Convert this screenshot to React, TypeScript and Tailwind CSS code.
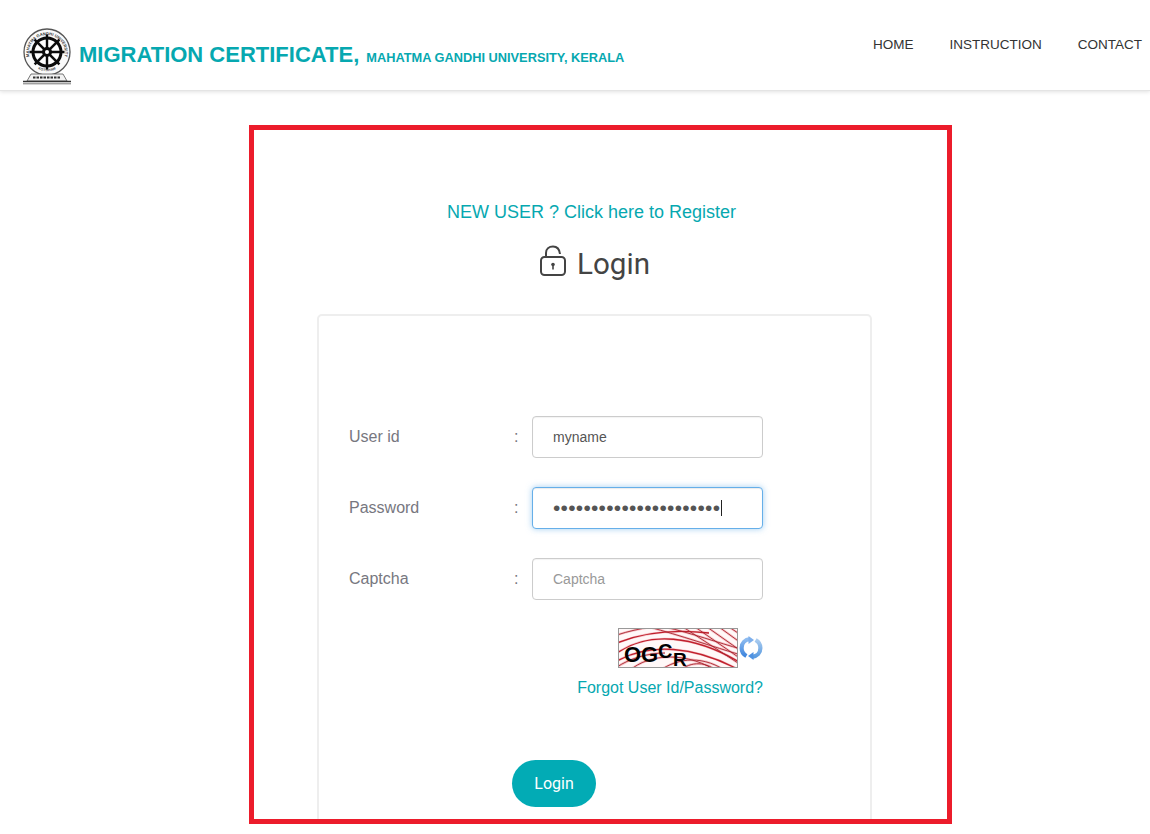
import React from "react";

function Logo() {
  const spokes = [0, 45, 90, 135];
  return (
    <svg width="50" height="57" viewBox="0 0 50 57" className="shrink-0">
      <defs>
        <path id="ringTop" d="M10 35 A18 18 0 1 1 40 35" />
        <path id="ringBottom" d="M13 39 A19 19 0 0 0 37 39" />
      </defs>
      <circle cx="25" cy="24" r="23" fill="#fafafa" stroke="#555" strokeWidth="1.3" />
      <text fontSize="4.1" fontWeight="700" fill="#333" fontFamily="Liberation Sans, sans-serif">
        <textPath href="#ringTop" startOffset="50%" textAnchor="middle">MAHATMA GANDHI UNIVERSITY</textPath>
      </text>
      <text fontSize="3.4" fontWeight="700" fill="#444" fontFamily="Liberation Sans, sans-serif">
        <textPath href="#ringBottom" startOffset="50%" textAnchor="middle">KOTTAYAM</textPath>
      </text>
      <circle cx="25" cy="24" r="14" fill="#fff" stroke="#0c0c0c" strokeWidth="3" />
      {spokes.map((a) => (
        <line key={a} x1="25" y1="6.5" x2="25" y2="41.5" stroke="#0c0c0c" strokeWidth="2.4" transform={`rotate(${a} 25 24)`} />
      ))}
      <circle cx="25" cy="24" r="5" fill="#0c0c0c" />
      <circle cx="25" cy="24" r="2" fill="#fff" />
      <path d="M5 53 L9 46 H41 L45 53 Z" fill="#f2f2f2" stroke="#555" strokeWidth="0.8" />
      <path d="M11 49.5 H39" stroke="#333" strokeWidth="1.8" strokeDasharray="2.5 1" />
      <path d="M1 53.5 H49" stroke="#333" strokeWidth="1.4" />
      <path d="M1 55.8 H49" stroke="#777" strokeWidth="1" />
    </svg>
  );
}

function Field({ label, children, last }: { label: string; children: React.ReactNode; last?: boolean }) {
  return (
    <div className={last ? "flex items-center h-[42px] mb-[28px]" : "flex items-center h-[42px] mb-[29px]"}>
      <label className="w-[165px] text-base text-[#777780]">{label}</label>
      <span className="w-[18px] text-base text-[#777780]">:</span>
      {children}
    </div>
  );
}

const inputCls =
  "w-[231px] h-[42px] rounded-[4px] border border-[#ccc] bg-white pl-5 pr-3 text-sm text-[#555] outline-none placeholder:text-[#999] shadow-[inset_0_1px_1px_rgba(0,0,0,0.05)]";

function Captcha() {
  const dark = [
    "M-2 24 C 30 2, 75 6, 122 34",
    "M-2 32 C 30 14, 75 16, 122 42",
    "M-2 14 C 25 3, 55 0, 90 4",
    "M10 42 C 30 24, 70 22, 100 44",
    "M30 -2 C 60 6, 95 18, 122 26",
    "M46 -2 C 72 4, 100 14, 122 20",
    "M64 -2 L 122 36",
    "M76 -2 L 122 30",
    "M88 -2 L 122 22",
    "M100 -2 L 122 14",
    "M110 -2 L 122 6",
    "M40 42 C 60 28, 85 26, 110 44",
    "M-2 6 C 10 2, 20 0, 32 -2",
    "M60 42 C 72 32, 88 32, 100 44",
    "M-2 38 C 10 30, 28 24, 46 24",
  ];
  return (
    <div className="relative w-[120px] h-[40px] border border-[#999] bg-[#fff8f8]">
      <svg width="118" height="38" viewBox="0 0 118 38" className="absolute left-0 top-0" fill="none">
        {dark.map((d) => (
          <path key={d} d={d} stroke="#f6c4c8" strokeWidth="2.4" />
        ))}
        {dark.map((d, i) => (
          <path key={d + "x"} d={d} stroke={i < 3 ? "#c01f2c" : "#a8222e"} strokeWidth={i < 3 ? 1.3 : 0.9} />
        ))}
      </svg>
      <span className="absolute left-[5px] top-[15px] text-[22px] leading-[22px] font-bold text-black">O</span>
      <span className="absolute left-[22px] top-[15px] text-[22px] leading-[22px] font-bold text-black">G</span>
      <span className="absolute left-[39px] top-[12px] text-[20px] leading-[20px] font-bold text-black">C</span>
      <span className="absolute left-[54px] top-[23px] text-[19px] leading-[15px] font-bold text-black">R</span>
    </div>
  );
}

function RefreshIcon() {
  return (
    <svg width="24" height="24" viewBox="0 0 24 24" fill="none" className="shrink-0">
      <defs>
        <linearGradient id="refL" x1="0" y1="0" x2="0" y2="1">
          <stop offset="0" stopColor="#8fbcf0" />
          <stop offset="1" stopColor="#3f86de" />
        </linearGradient>
        <linearGradient id="refR" x1="0" y1="0" x2="0" y2="1">
          <stop offset="0" stopColor="#a9cbef" />
          <stop offset="1" stopColor="#5a9be0" />
        </linearGradient>
      </defs>
      <path d="M11 3.2 C6 3.6 2.6 7 2.6 12 C2.6 15.4 4.2 18.2 7.4 20" stroke="url(#refL)" strokeWidth="4.2" />
      <path d="M13 20.8 C18 20.4 21.4 17 21.4 12 C21.4 8.6 19.8 5.8 16.6 4" stroke="url(#refR)" strokeWidth="4.2" />
      <path d="M9.5 0 L15 4 L9.5 8 Z" fill="#7fb0ec" />
      <path d="M14.5 24 L9 20 L14.5 16 Z" fill="#4f92e2" />
    </svg>
  );
}

export default function App() {
  return (
    <div className="h-[834px] overflow-hidden bg-white font-['Liberation_Sans',Arial,sans-serif]">
      <header className="h-[91px] flex items-start border-b border-[#e4e4e4] shadow-[0_1px_4px_rgba(0,0,0,0.12)] pl-[22px] pr-2">
        <div className="flex items-center mt-[28px]">
          <Logo />
          <div className="ml-[7px] flex items-baseline mb-[5px] text-[#06a8b0] font-bold whitespace-nowrap">
            <span className="text-[22px]">MIGRATION CERTIFICATE,</span>
            <span className="text-[12.8px] ml-[7px]">MAHATMA GANDHI UNIVERSITY, KERALA</span>
          </div>
        </div>
        <nav className="ml-auto mt-[37px] flex gap-9 text-[13.5px] text-[#333] leading-4">
          <a>HOME</a>
          <a>INSTRUCTION</a>
          <a>CONTACT</a>
        </nav>
      </header>

      <main className="ml-[249px] mt-[34px] w-[703px] h-[699px] border-[5px] border-[#ec1c2b] overflow-hidden pl-[63px]">
        <div className="w-[555px]">
          <div className="pt-[72px] pr-[6px] text-center text-lg leading-[20px] text-[#06a8b0]">
            NEW USER ? Click here to Register
          </div>
          <h1 className="mt-[20px] flex items-center justify-center gap-[10px] h-[44px] text-[29.6px] text-[#444] font-normal font-['Roboto',sans-serif]">
            <svg width="28" height="32" viewBox="0 0 28 32" fill="none" stroke="#444" strokeWidth="2" className="mb-[6px]">
              <rect x="2" y="12" width="24" height="18" rx="3.5" />
              <path d="M7 12 V8 C7 4 10 1.5 14 1.5 C18 1.5 20.5 4.5 21 9" />
              <circle cx="14" cy="19.5" r="1.8" fill="#444" stroke="none" />
              <path d="M14 20 V24.5" strokeWidth="1.6" />
            </svg>
            Login
          </h1>
          <div className="mt-[28px] h-[520px] rounded-[5px] border-2 border-[#eeeeee] pt-[100px] pl-[30px]">
            <Field label="User id">
              <input className={inputCls} defaultValue="myname" />
            </Field>
            <Field label="Password">
              <div className="relative">
                <input
                  type="password"
                  className="w-[231px] h-[42px] rounded-[4px] border border-[#66afe9] bg-white pl-5 pr-2 text-[21px] tracking-[0.25px] text-[#555] outline-none shadow-[inset_0_1px_1px_rgba(0,0,0,0.08),0_0_6px_rgba(102,175,233,0.6)]"
                  defaultValue="mypassword1234567890ab"
                />
                <span className="absolute left-[189px] top-[13px] h-[16px] w-px bg-[#222]" />
              </div>
            </Field>
            <Field label="Captcha" last>
              <input className={inputCls} placeholder="Captcha" />
            </Field>
            <div className="w-[414px] flex justify-end items-center h-[40px] gap-px">
              <Captcha />
              <RefreshIcon />
            </div>
            <div className="w-[414px] mt-[10px] text-right text-base leading-5 text-[#06a8b0]">
              Forgot User Id/Password?
            </div>
            <button className="block ml-[163px] mt-[62px] w-[84px] h-[47px] rounded-full bg-[#02abb5] text-white text-base font-['Roboto',sans-serif]">
              Login
            </button>
          </div>
        </div>
      </main>
    </div>
  );
}
